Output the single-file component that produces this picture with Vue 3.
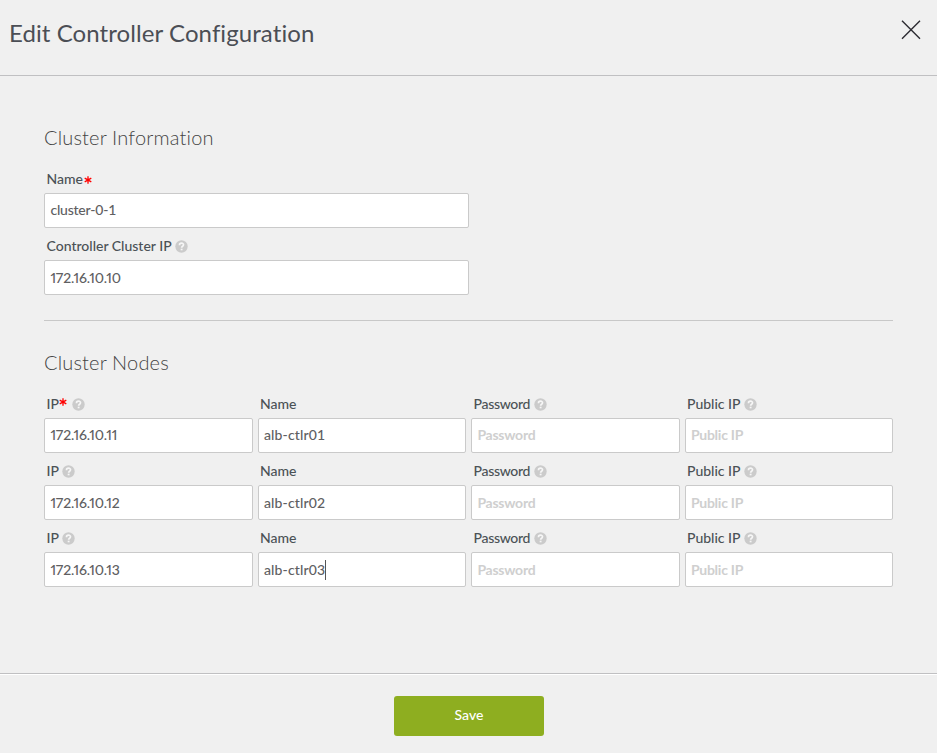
<script setup>
const clusterFields = [
  { label: 'Name', value: 'cluster-0-1', required: true },
  { label: 'Controller Cluster IP', value: '172.16.10.10', help: true, numeric: true, low: true }
]

const makeNode = (ip, name, extra = {}) => [
  { label: 'IP', value: ip, help: true, numeric: true, requiredHigh: extra.first },
  { label: 'Name', value: name, caret: extra.active },
  { label: 'Password', placeholder: 'Password', help: true, narrow: true },
  { label: 'Public IP', placeholder: 'Public IP', help: true }
]

const nodes = [
  makeNode('172.16.10.11', 'alb-ctlr01', { first: true }),
  makeNode('172.16.10.12', 'alb-ctlr02'),
  makeNode('172.16.10.13', 'alb-ctlr03', { active: true })
]
</script>

<template>
  <div class="modal">
    <header class="header">
      <h1 class="title">Edit Controller Configuration</h1>
      <svg class="close" width="20" height="20" viewBox="0 0 20 20">
        <path d="M1 .7 L19 18.7 M19 .7 L1 18.7" stroke="#2b2a30" stroke-width="1.4" fill="none" />
      </svg>
    </header>

    <main class="body">
      <section class="section info">
        <h2 class="heading">Cluster Information</h2>
        <div v-for="f in clusterFields" :key="f.label" class="field">
          <div class="label">
            <span>{{ f.label }}</span>
            <svg v-if="f.required" class="star" width="8" height="8" viewBox="0 0 8 8">
              <path d="M4 .2V7.8M.7 2.1L7.3 5.9M7.3 2.1L.7 5.9" stroke="#f00" stroke-width="1.3" />
            </svg>
            <svg v-if="f.help" class="help" width="13" height="13" viewBox="-.3 -.3 12.6 12.6">
              <circle cx="6" cy="6" r="6" fill="#cbcbcb" />
              <path d="M4 4.7C4 2.2 8 2.2 8 4.4C8 5.8 6.1 5.7 6.1 7.3" stroke="#f6f6f6" stroke-width="1.6" fill="none" />
              <rect x="5.2" y="8.1" width="1.8" height="1.6" fill="#f6f6f6" />
            </svg>
          </div>
          <div class="input" :class="{ numeric: f.numeric, low: f.low, cluster: !f.numeric }">{{ f.value }}</div>
        </div>
      </section>

      <section class="section nodes">
        <h2 class="heading">Cluster Nodes</h2>
        <div v-for="(row, i) in nodes" :key="i" class="row">
          <div v-for="f in row" :key="f.label" class="field">
            <div class="label">
              <span :class="{ narrow: f.narrow }">{{ f.label }}</span>
              <svg v-if="f.requiredHigh" class="star high" width="8" height="8" viewBox="0 0 8 8">
                <path d="M4 .2V7.8M.7 2.1L7.3 5.9M7.3 2.1L.7 5.9" stroke="#f00" stroke-width="1.3" />
              </svg>
              <svg v-if="f.help" class="help" width="13" height="13" viewBox="-.3 -.3 12.6 12.6">
                <circle cx="6" cy="6" r="6" fill="#cbcbcb" />
                <path d="M4 4.7C4 2.2 8 2.2 8 4.4C8 5.8 6.1 5.7 6.1 7.3" stroke="#f6f6f6" stroke-width="1.6" fill="none" />
                <rect x="5.2" y="8.1" width="1.8" height="1.6" fill="#f6f6f6" />
              </svg>
            </div>
            <div class="input" :class="{ numeric: f.numeric, low: i > 0, empty: f.placeholder }">
              <span :class="{ host: f.label === 'Name' }">{{ f.value || f.placeholder }}</span><i v-if="f.caret" class="caret"></i>
            </div>
          </div>
        </div>
      </section>
    </main>

    <footer class="footer">
      <button class="save" type="button">Save</button>
    </footer>
  </div>
</template>

<style>
body {
  margin: 0;
  background: #f0f0f0;
}
</style>

<style scoped>
.modal {
  box-sizing: border-box;
  display: flex;
  flex-direction: column;
  width: 937px;
  height: 753px;
  background: #f0f0f0;
  color: #4c5156;
  font-family: Lato, "Liberation Sans", sans-serif;
  overflow: hidden;
}
.header {
  box-sizing: border-box;
  display: flex;
  justify-content: space-between;
  height: 76px;
  padding: 20px 16px 0 9px;
  border-bottom: 1px solid #c0c0c2;
}
.title {
  margin: -1px 0 0;
  font-size: 24px;
  line-height: 28px;
  font-weight: 400;
  letter-spacing: 0.08px;
  color: #4b4e55;
  white-space: nowrap;
}
.close {
  display: block;
}
.body {
  flex: 1;
  padding: 0 44px;
}
.info {
  box-sizing: border-box;
  height: 245px;
  padding-top: 49px;
  border-bottom: 1px solid #c8c8c8;
}
.info .field {
  width: 425px;
}
.nodes {
  padding-top: 29px;
}
.heading {
  margin: 0;
  height: 36px;
  font-size: 20px;
  line-height: 25px;
  font-weight: 300;
  letter-spacing: 0.17px;
  color: #444;
  white-space: nowrap;
}
.label {
  display: flex;
  align-items: center;
  box-sizing: border-box;
  height: 32px;
  padding: 3px 0 0 2.5px;
  font-size: 14px;
  line-height: 18px;
  font-weight: 500;
  color: #4b5256;
  white-space: nowrap;
}
.narrow {
  letter-spacing: -0.3px;
}
.star {
  margin: 3px 0 0 0.5px;
}
.star.high {
  margin-top: -4px;
}
.help {
  margin: 1px 0 0 3.5px;
}
.star + .help {
  margin-left: 4.2px;
}
.input {
  display: flex;
  align-items: center;
  box-sizing: border-box;
  height: 35px;
  padding: 0 5px 2px 5.4px;
  border: 1px solid #cacaca;
  border-radius: 2px;
  background: #fff;
  color: #606062;
  font-size: 14px;
  line-height: 18px;
  font-weight: 500;
  white-space: nowrap;
}
.input.low {
  padding-bottom: 0;
}
.input.cluster {
  letter-spacing: -0.2px;
}
.input.numeric {
  font-variant-numeric: proportional-nums;
  letter-spacing: -0.14px;
}
.input.empty {
  color: #cfcfcf;
  font-weight: 700;
  letter-spacing: -0.25px;
}
.host {
  letter-spacing: 0.15px;
}
.row {
  display: grid;
  grid-template-columns: repeat(4, 1fr);
  column-gap: 5px;
}
.caret {
  width: 1px;
  height: 20px;
  background: #555;
}
.footer {
  box-sizing: border-box;
  display: flex;
  justify-content: center;
  align-items: flex-start;
  height: 80px;
  padding: 22px 0 0 1px;
  border-top: 1px solid #c0c0c2;
  box-shadow: inset 0 1px #fff;
}
.save {
  width: 150px;
  height: 40px;
  padding: 0 0 2px;
  border: 0;
  border-radius: 3px;
  background: #8eae20;
  color: #fff;
  font-family: inherit;
  font-size: 14px;
  line-height: 18px;
  font-weight: 500;
}
</style>
